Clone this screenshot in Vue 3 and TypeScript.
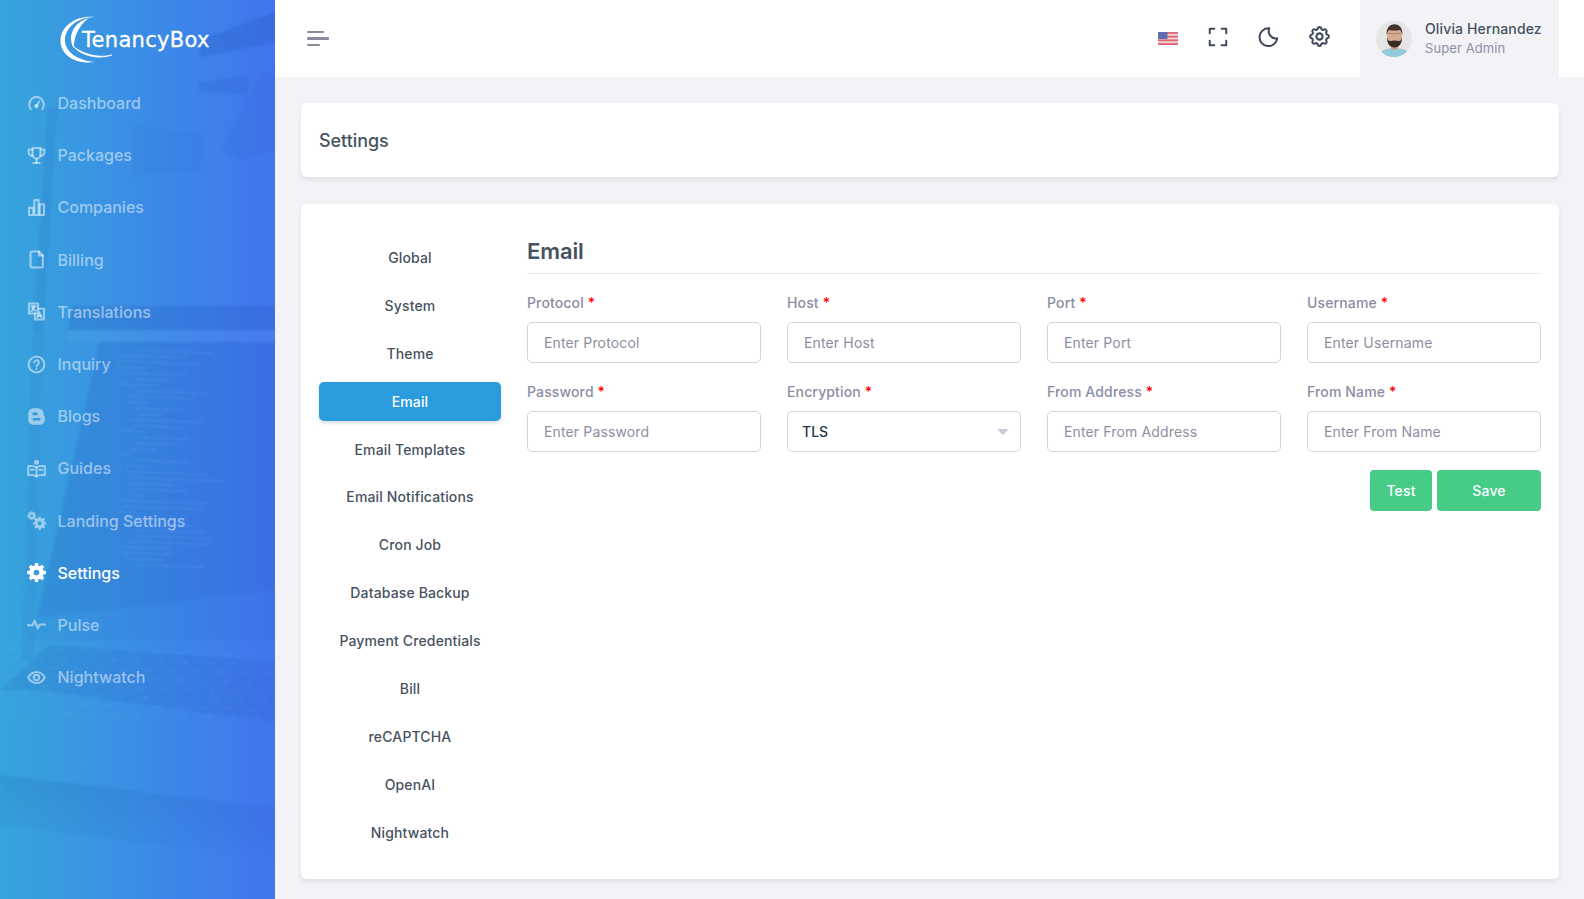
<script setup lang="ts">
import { ref } from 'vue'

interface NavIcon { stroke?: string[]; fill?: string[] }
interface NavItem { label: string; icon: NavIcon; active?: boolean }

function gear(cx: number, cy: number, R: number, r: number, hole: number, teeth = 8): string {
  const pts: string[] = []
  const step = (Math.PI * 2) / teeth
  for (let i = 0; i < teeth; i++) {
    const a = i * step - Math.PI / 2
    const list: [number, number][] = [
      [r, a - step * 0.36],
      [R, a - step * 0.2],
      [R, a + step * 0.2],
      [r, a + step * 0.36],
    ]
    for (const [rad, ang] of list) {
      pts.push(`${(cx + rad * Math.cos(ang)).toFixed(2)} ${(cy + rad * Math.sin(ang)).toFixed(2)}`)
    }
  }
  const body = 'M' + pts.join('L') + 'Z'
  return `${body}M${cx - hole} ${cy}a${hole} ${hole} 0 1 0 ${hole * 2} 0a${hole} ${hole} 0 1 0 ${-hole * 2} 0Z`
}

const navItems: NavItem[] = [
  { label: 'Dashboard', icon: { stroke: ['M4.600 19A10 10 0 0 1 12 3.500 10 10 0 0 1 19.400 19', 'M11.500 15.500l4-6'], fill: ['M12 12.500a2.800 2.800 0 1 1-.1 5.600 2.800 2.800 0 0 1 .1-5.600z'] } },
  { label: 'Packages', icon: { stroke: ['M7 2.500h10v8.500a5 5 0 0 1-10 0z', 'M7 4.500H2v3.500a4 4 0 0 0 5 4', 'M17 4.500h5v3.500a4 4 0 0 1-5 4', 'M12 16v5', 'M8 21.500h8'] } },
  { label: 'Companies', icon: { stroke: ['M2.500 12.500h5.500v9H2.500z', 'M9.300 2.500h5.400v19H9.300z', 'M16 8h5.500v13.500H16z'] } },
  { label: 'Billing', icon: { stroke: ['M4.500 3.500a1.500 1.500 0 0 1 1.500-1.500h9l5 5v13.500a1.500 1.500 0 0 1-1.500 1.500H6a1.500 1.500 0 0 1-1.500-1.500z', 'M15 2v5h5'] } },
  { label: 'Translations', icon: { stroke: ['M2.500 2h11.500v12.500H2.500z', 'M14 8.500h7.500V22H10v-7.500', 'M5.500 5.500h6', 'M8.500 5.500c0 3-1 5-3 6', 'M7 8c.8 1.500 2 2.500 4 3', 'M13 19.500l2.700-6.500 2.700 6.500', 'M14 17.500h3.400'] } },
  { label: 'Inquiry', icon: { stroke: ['M12 2a10 10 0 1 1 0 20 10 10 0 0 1 0-20z', 'M9.200 9.500a2.900 2.900 0 1 1 4.600 2.300c-1.100.8-1.800 1.300-1.800 2.600', 'M12 17.300v.2'] } },
  { label: 'Blogs', icon: { fill: ['M8 1.500h6a7 7 0 0 1 7 7V10c0 .8.700 1.500 1.500 1.500V16a6.500 6.500 0 0 1-6.500 6.500H8A6.500 6.500 0 0 1 1.500 16V8A6.500 6.500 0 0 1 8 1.500zM8.500 7a1.500 1.500 0 0 0 0 3.500h3.500a1.750 1.750 0 0 0 0-3.500zM8.500 14a1.500 1.500 0 0 0 0 3.200h7a1.600 1.600 0 0 0 0-3.200z'] } },
  { label: 'Guides', icon: { stroke: ['M12 10.500C9.500 8.500 6 8.500 1.500 9v11.500c4.500-.5 8-.5 10.500 1.500 2.500-2 6-2 10.500-1.500V9c-4.500-.5-8-.5-10.500 1.500z', 'M12 10.500V22', 'M5 13.500h3.500', 'M15.500 13.500H19'], fill: ['M12 1a3.200 3.200 0 1 1 0 6.400A3.200 3.200 0 0 1 12 1z'] } },
  { label: 'Landing Settings', icon: { fill: [gear(16, 15.500, 8.500, 6.400, 2.500), gear(6, 6, 5.800, 4.200, 1.600)] } },
  { label: 'Settings', active: true, icon: { fill: [gear(12, 12, 12, 9, 3.600)] } },
  { label: 'Pulse', icon: { stroke: ['M1 13h6l2.500-6 4 10 2.500-5h7'] } },
  { label: 'Nightwatch', icon: { stroke: ['M1.500 12C4 7.500 7.500 5 12 5s8 2.500 10.500 7c-2.500 4.500-6 7-10.500 7s-8-2.500-10.500-7z', 'M12 8.500a3.500 3.500 0 1 1 0 7 3.500 3.500 0 0 1 0-7z'] } },
]

const tabs = ['Global', 'System', 'Theme', 'Email', 'Email Templates', 'Email Notifications', 'Cron Job', 'Database Backup', 'Payment Credentials', 'Bill', 'reCAPTCHA', 'OpenAI', 'Nightwatch']
const activeTab = ref('Email')

interface Field { label: string; placeholder?: string; value?: string }
const fields: Field[] = [
  { label: 'Protocol', placeholder: 'Enter Protocol' },
  { label: 'Host', placeholder: 'Enter Host' },
  { label: 'Port', placeholder: 'Enter Port' },
  { label: 'Username', placeholder: 'Enter Username' },
  { label: 'Password', placeholder: 'Enter Password' },
  { label: 'Encryption', value: 'TLS' },
  { label: 'From Address', placeholder: 'Enter From Address' },
  { label: 'From Name', placeholder: 'Enter From Name' },
]

let seed = 17
function rnd(): number {
  seed = (seed * 9301 + 49297) % 233280
  return seed / 233280
}

const codeLines: { x: number; y: number; w: number }[] = []
for (let row = 0; row < 38; row++) {
  const indent = 118 + Math.floor(rnd() * 6) * 4
  let x = indent
  const parts = 2 + Math.floor(rnd() * 7)
  for (let p = 0; p < parts; p++) {
    const w = 3 + rnd() * 12
    if (x + w > 262) break
    codeLines.push({ x, y: 349 + row * 5.8, w })
    x += w + 1.5
  }
}

const keys: { x: number; y: number; w: number }[] = []
for (let row = 0; row < 8; row++) {
  for (let c = 0; c < 12; c++) {
    keys.push({ x: 10 + row * -4 + c * 24 + (row % 2) * 8, y: 648 + row * 9 + c * 0.6, w: 4 + rnd() * 5 })
  }
}
</script>

<template>
  <div class="app">
    <aside class="sidebar">
      <svg class="side-art" viewBox="0 0 275 899" preserveAspectRatio="none" aria-hidden="true">
        <defs>
          <linearGradient id="edgeShade" x1="0" y1="0" x2="0" y2="1">
            <stop offset="0" stop-color="#10408f" stop-opacity="0.12" />
            <stop offset="1" stop-color="#10408f" stop-opacity="0" />
          </linearGradient>
        </defs>
        <polygon points="200,40 275,12 275,42 200,57" fill="#1c52b5" opacity="0.24" />
        <polygon points="198,83 248,75 248,95 200,91" fill="#1c52b5" opacity="0.16" />
        <polygon points="132,125 205,135 200,172 132,175" fill="#1c52b5" opacity="0.06" />
        <polygon points="222,150 262,72 275,72 275,150 240,160" fill="#1c52b5" opacity="0.08" />
        <polygon points="48,107 57,107 43,333 33,333" fill="#1c60b0" opacity="0.14" />
        <polygon points="33,333 43,333 33,660 22,660" fill="#1c60b0" opacity="0.09" />
        <polygon points="72,306 275,306 275,330 68,330" fill="#1c52b5" opacity="0.2" />
        <polygon points="68,330 275,330 275,342 66,342" fill="#ffffff" opacity="0.04" />
        <polygon points="100,342 275,342 275,590 37,618" fill="#1c52b5" opacity="0.18" />
        <polygon points="37,618 275,590 275,640 30,640" fill="#1c52b5" opacity="0.07" />
        <polygon points="0,690 50,645 275,662 275,722 110,700 40,690" fill="#1c52b5" opacity="0.14" />
        <polygon points="0,775 275,808 275,860 0,825" fill="url(#edgeShade)" />
        <rect v-for="(c, i) in codeLines" :key="'c' + i" :x="c.x" :y="c.y + (c.x - 118) * 0.04" :width="c.w" height="1.200" fill="#ffffff" opacity="0.11" />
        <rect v-for="(k, i) in keys" :key="'k' + i" :x="k.x" :y="k.y" :width="k.w" height="1.500" fill="#ffffff" opacity="0.08" />
      </svg>

      <div class="brand">
        <svg class="brand-mark" viewBox="55 12 62 56" aria-hidden="true">
          <path d="M95 17C76 15 60.500 26 60.500 41 60.500 54 74 65 95 62 80 61 65.500 53 65 41 64.500 28 77 17 95 17Z" />
          <path d="M89 18C77 21 71 30 71 38 71 42 72 46 74 48 73.500 37 79 25 89 18Z" />
          <path d="M74 47C81 56 100 60 112 55 100 58 85 55 74 47Z" stroke="#fff" stroke-width="0.600" />
        </svg>
        <span class="brand-name">TenancyBox</span>
      </div>

      <nav class="nav">
        <a v-for="item in navItems" :key="item.label" class="nav-item" :class="{ active: item.active }">
          <svg class="nav-icon" viewBox="0 0 24 24" aria-hidden="true">
            <path v-for="(d, i) in item.icon.stroke || []" :key="'s' + i" :d="d" class="ico-stroke" />
            <path v-for="(d, i) in item.icon.fill || []" :key="'f' + i" :d="d" class="ico-fill" />
          </svg>
          <span>{{ item.label }}</span>
        </a>
      </nav>
    </aside>

    <div class="main">
      <header class="topbar">
        <button class="burger" aria-label="Menu">
          <i class="b1"></i><i class="b2"></i><i class="b3"></i>
        </button>
        <div class="top-actions">
          <svg class="flag" viewBox="0 0 20 13" aria-hidden="true">
            <rect width="20" height="13" fill="#f4d6da" />
            <rect y="0" width="20" height="1.900" fill="#dd6a78" />
            <rect y="3.700" width="20" height="1.900" fill="#dd6a78" />
            <rect y="7.400" width="20" height="1.900" fill="#dd6a78" />
            <rect y="11.100" width="20" height="1.900" fill="#dd6a78" />
            <rect width="9.500" height="7" fill="#5f6db0" />
          </svg>
          <svg class="t-icon" viewBox="0 0 24 24" aria-hidden="true">
            <path d="M3 8V3h5M16 3h5v5M21 16v5h-5M8 21H3v-5" />
          </svg>
          <svg class="t-icon" viewBox="0 0 24 24" aria-hidden="true">
            <path d="M12 2.500c.13 0 .26 0 .39 0a7.900 7.900 0 0 0 8.600 11a9.700 9.700 0 1 1-9-11z" />
          </svg>
          <svg class="t-icon t-gear" viewBox="0 0 24 24" aria-hidden="true">
            <path d="M10.325 4.317c.426 -1.756 2.924 -1.756 3.35 0a1.724 1.724 0 0 0 2.573 1.066c1.543 -.94 3.31 .826 2.37 2.37a1.724 1.724 0 0 0 1.065 2.572c1.756 .426 1.756 2.924 0 3.35a1.724 1.724 0 0 0 -1.066 2.573c.94 1.543 -.826 3.31 -2.37 2.37a1.724 1.724 0 0 0 -2.572 1.065c-.426 1.756 -2.924 1.756 -3.35 0a1.724 1.724 0 0 0 -2.573 -1.066c-1.543 .94 -3.31 -.826 -2.37 -2.37a1.724 1.724 0 0 0 -1.065 -2.572c-1.756 -.426 -1.756 -2.924 0 -3.35a1.724 1.724 0 0 0 1.066 -2.573c-.94 -1.543 .826 -3.31 2.37 -2.37c1 .608 2.296 .07 2.572 -1.065z" />
            <circle cx="12" cy="12" r="3" />
          </svg>
        </div>
        <div class="user">
          <svg class="avatar" viewBox="0 0 36 36" aria-hidden="true">
            <clipPath id="avClip"><circle cx="18" cy="18" r="18" /></clipPath>
            <g clip-path="url(#avClip)">
              <rect width="36" height="36" fill="#e5e5e5" />
              <path d="M3 36c0-5 4-7.500 10-8.500h11c6 1 9 3.500 9 8.500z" fill="#93cbdc" />
              <rect x="15" y="23" width="7" height="5.500" fill="#c99a80" />
              <ellipse cx="18.500" cy="15" rx="7.500" ry="10.500" fill="#d9ab92" />
              <path d="M11 16.500c-.2 6 3 10 7.500 10s7.700-4 7.500-10c-.7 2.500-1.700 3.700-3 3.500-2.800-.8-6.200-.8-9 0-1.300.2-2.300-1-3-3.500z" fill="#3a2b23" />
              <path d="M10.800 14c-1-7 3.200-10.800 7.700-10.800s8.700 3.800 7.700 10.800c-.5-2.500-1-4-2.300-5-3 .7-7.800.7-10.800 0-1.300 1-1.800 2.500-2.300 5z" fill="#43322a" />
              <path d="M12 12.500h4.500l1 .6h1.500l1-.6H25" fill="none" stroke="#7a6a5f" stroke-width="0.600" />
            </g>
          </svg>
          <div class="user-text">
            <div class="user-name">Olivia Hernandez</div>
            <div class="user-role">Super Admin</div>
          </div>
        </div>
      </header>

      <main class="content">
        <section class="card head-card">
          <h1>Settings</h1>
        </section>

        <section class="card body-card">
          <ul class="tabs">
            <li v-for="t in tabs" :key="t" class="tab" :class="{ active: t === activeTab }" @click="activeTab = t">{{ t }}</li>
          </ul>
          <div class="pane">
            <h2>Email</h2>
            <form class="grid" @submit.prevent>
              <div v-for="f in fields" :key="f.label" class="field">
                <label>{{ f.label }} <b>*</b></label>
                <div v-if="f.value" class="select">
                  <span>{{ f.value }}</span>
                  <i class="caret"></i>
                </div>
                <input v-else type="text" :placeholder="f.placeholder" />
              </div>
            </form>
            <div class="buttons">
              <button class="btn test">Test</button>
              <button class="btn save">Save</button>
            </div>
          </div>
        </section>
      </main>
    </div>
  </div>
</template>

<style>
html, body { margin: 0; padding: 0; background: #f2f2f7; }
</style>

<style scoped>
.app {
  display: flex;
  height: 899px;
  overflow: hidden;
  font-family: Inter, "Liberation Sans", sans-serif;
  color: #475261;
  background: #f2f2f7;
}
.sidebar {
  position: relative;
  flex: 0 0 275px;
  width: 275px;
  background: linear-gradient(90deg, #36a5db 0%, #4075ef 100%);
  overflow: hidden;
}
.side-art {
  position: absolute;
  inset: 0;
  width: 100%;
  height: 100%;
  filter: blur(0.8px);
}
.brand {
  position: relative;
  height: 77px;
  display: flex;
  align-items: center;
  padding-left: 60px;
  color: #fff;
}
.brand-mark {
  width: 62px;
  height: 56px;
  margin-left: -5px;
  margin-top: 3px;
  flex: none;
}
.brand-mark path { fill: #fff; }
.brand-name {
  margin-left: -35px;
  font-family: "DejaVu Sans", sans-serif;
  font-size: 21px;
  letter-spacing: 0.3px;
  line-height: 24px;
  color: #fff;
  margin-top: 2px;
  -webkit-text-stroke: 0.3px #fff;
}
.nav {
  position: relative;
  display: flex;
  flex-direction: column;
}
.nav-item {
  display: flex;
  align-items: center;
  gap: 11.5px;
  height: 52.2px;
  padding-left: 27px;
  font-size: 16px;
  font-weight: 500;
  color: rgba(255, 255, 255, 0.5);
}
.nav-item.active { color: #fff; }
.nav-icon { width: 19px; height: 19px; flex: none; }
.ico-stroke { fill: none; stroke: currentColor; stroke-width: 2.6; stroke-linecap: round; stroke-linejoin: round; }
.ico-fill { fill: currentColor; fill-rule: evenodd; }

.main {
  flex: 1;
  min-width: 0;
  display: flex;
  flex-direction: column;
}
.topbar {
  height: 77px;
  flex: none;
  background: #fff;
  display: flex;
  align-items: stretch;
  padding: 0 25px 0 32px;
}
.burger {
  align-self: center;
  display: flex;
  flex-direction: column;
  gap: 4.600px;
  padding: 0;
  width: 22px;
  background: none;
  border: 0;
  margin-top: 0;
}
.burger i { display: block; height: 2px; border-radius: 1px; background: #8b8b9b; }
.b1 { width: 17px; }
.b2 { width: 22px; height: 2.500px !important; }
.b3 { width: 13px; }
.top-actions {
  margin-left: auto;
  display: flex;
  align-items: center;
  gap: 28.5px;
  padding-right: 30px;
}
.flag { width: 20px; height: 13px; margin-right: 1px; }
.t-icon {
  width: 22px;
  height: 22px;
  fill: none;
  stroke: #3f4a5a;
  stroke-width: 2.2;
  stroke-linecap: round;
  stroke-linejoin: round;
  margin-top: -4px;
}
.t-gear {
  width: 25px;
  height: 25px;
  margin: -4px -1.5px 0;
  stroke-width: 2;
}
.user {
  width: 199px;
  background: #f2f2f7;
  display: flex;
  align-items: center;
  padding-left: 16px;
  box-sizing: border-box;
  gap: 13px;
}
.avatar { width: 36px; height: 36px; flex: none; }
.user-name { font-size: 14px; letter-spacing: 0.14px; font-weight: 500; line-height: 19px; color: #475261; margin-top: -1px; }
.user-role { font-size: 13px; letter-spacing: 0.1px; line-height: 19px; color: #8e8fa6; margin-top: 1px; }

.content {
  flex: 1;
  padding: 26px 25px 27px 26px;
  display: flex;
  flex-direction: column;
  gap: 27px;
  min-height: 0;
}
.card {
  background: #fff;
  border-radius: 6px;
  box-shadow: 0 3px 5px rgba(40, 45, 70, 0.09);
}
.head-card {
  height: 74px;
  flex: none;
  display: flex;
  align-items: center;
  padding: 1px 18px 0;
  box-sizing: border-box;
}
h1 { margin: 0; font-size: 18px; font-weight: 500; color: #475261; letter-spacing: -0.05px; }
.body-card {
  flex: 1;
  display: flex;
  gap: 26px;
  padding: 34px 18px 18px;
}
.tabs {
  list-style: none;
  margin: 0;
  padding: 0;
  width: 182px;
  flex: none;
}
.tab {
  height: 39px;
  margin-bottom: 8.900px;
  display: flex;
  align-items: center;
  justify-content: center;
  font-size: 14px;
  letter-spacing: 0.14px;
  font-weight: 500;
  color: #475261;
  border-radius: 5px;
  cursor: pointer;
}
.tab.active {
  background: #2a9bdc;
  color: #fff;
  box-shadow: 0 2px 4px rgba(30, 60, 90, 0.18);
}
.pane { flex: 1; min-width: 0; padding-top: 2px; }
h2 {
  margin: 0 0 19px;
  font-size: 22px;
  line-height: 22px;
  letter-spacing: -0.1px;
  font-weight: 600;
  color: #475261;
  padding-bottom: 11px;
  border-bottom: 1px solid #e8e9ef;
}
.grid {
  display: grid;
  grid-template-columns: repeat(4, 1fr);
  column-gap: 26px;
  row-gap: 19px;
}
.field { display: flex; flex-direction: column; gap: 9px; }
label {
  font-size: 14px;
  letter-spacing: 0.14px;
  font-weight: 500;
  line-height: 20px;
  color: #8a8da3;
}
label b { color: #f00; font-weight: 500; }
input, .select {
  height: 41px;
  box-sizing: border-box;
  width: 100%;
  border: 1px solid #cfd3de;
  border-radius: 5px;
  background: #fff;
  font-family: inherit;
  font-size: 14px;
  letter-spacing: 0.14px;
  padding: 0 16px;
  outline: none;
}
input::placeholder { color: #8d8fa3; opacity: 1; }
.select {
  display: flex;
  align-items: center;
  justify-content: space-between;
  padding: 0 11px 0 14px;
  color: #24364b;
  font-weight: 500;
  letter-spacing: 0;
}
.caret {
  width: 0;
  height: 0;
  border-left: 6px solid transparent;
  border-right: 6px solid transparent;
  border-top: 6px solid #c6cbd6;
}
.buttons {
  margin-top: 18px;
  display: flex;
  justify-content: flex-end;
  gap: 5px;
}
.btn {
  height: 41px;
  border: 0;
  border-radius: 4px;
  background: #47cc88;
  color: #fff;
  font-family: inherit;
  font-size: 14px;
  letter-spacing: 0.14px;
  font-weight: 500;
}
.test { width: 62px; }
.save { width: 104px; }
</style>
